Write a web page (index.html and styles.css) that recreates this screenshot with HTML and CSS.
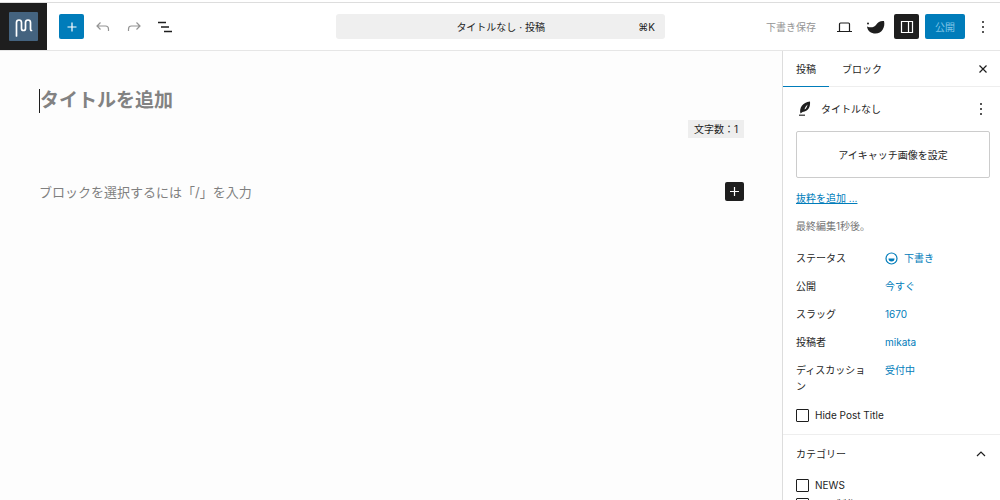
FILE: index.html
```html
<!DOCTYPE html>
<html lang="ja">
<head>
  <meta charset="UTF-8">
  <title>投稿を編集</title>
  <link rel="stylesheet" href="styles.css">
</head>
<body>
  <header class="topbar">
    <a href="#" class="site-logo" aria-label="サイト">
      <svg width="29" height="29" viewBox="0 0 29 29">
        <rect width="29" height="29" rx="1" fill="#44637f" stroke="none"/>
        <path d="M7.500 24V10.500a2.500 2.500 0 0 1 5 0v6a2 2 0 0 0 4 0v-6a2.500 2.500 0 0 1 5 0v6q0 2 1 2" fill="none" stroke="#fff" stroke-width="1.700" stroke-linecap="round"/>
      </svg>
    </a>
    <div class="tools">
      <button class="icon-button primary" aria-label="ブロックを追加">
        <svg width="18" height="18" viewBox="0 0 18 18"><path d="M9 4.500v9M4.500 9h9"/></svg>
      </button>
      <button class="icon-button muted" aria-label="元に戻す">
        <svg width="18" height="18" viewBox="0 0 18 18"><path d="M6.500 4.500L3 8l3.500 3.500M3 8h8.500q3 0 3 3v2"/></svg>
      </button>
      <button class="icon-button muted" aria-label="やり直す">
        <svg width="18" height="18" viewBox="0 0 18 18"><path d="M11.500 4.500L15 8l-3.500 3.500M15 8H6.500q-3 0-3 3v2"/></svg>
      </button>
      <button class="icon-button" aria-label="リスト表示">
        <svg class="bold" width="18" height="18" viewBox="0 0 18 18"><path d="M2 4.500h8M5 9h8M8 13.500h8"/></svg>
      </button>
    </div>
    <button class="command">
      <span class="command-title">タイトルなし · 投稿</span>
      <kbd class="shortcut">⌘K</kbd>
    </button>
    <div class="actions">
      <button class="save">下書き保存</button>
      <button class="icon-button" aria-label="表示">
        <svg width="18" height="18" viewBox="0 0 18 18"><path d="M3.500 13V6q0-1 1-1h8q1 0 1 1v7M1 13.500h15"/></svg>
      </button>
      <button class="icon-button" aria-label="プラグイン">
        <svg class="solid" width="20" height="18" viewBox="0 0 20 18"><circle cx="2" cy="5.500" r="1"/><path d="M1 8.500c3.500 1.500 7 1 9-1.500C12 4 14.500 2.500 18 3c1.500 6-2 12.500-8.500 12.500C5 15.500 1.500 13 1 8.500z"/></svg>
      </button>
      <button class="icon-button dark" aria-label="設定">
        <svg width="18" height="18" viewBox="0 0 18 18"><path d="M3.500 3.500h11v11h-11zM10.500 3.500v11"/></svg>
      </button>
      <button class="publish">公開</button>
      <button class="more" aria-label="オプション">
        <svg class="solid" width="18" height="18" viewBox="0 0 18 18"><circle cx="9" cy="4" r="1"/><circle cx="9" cy="9" r="1"/><circle cx="9" cy="14" r="1"/></svg>
      </button>
    </div>
  </header>

  <div class="workspace">
    <main class="editor">
      <h1 class="post-title">タイトルを追加</h1>
      <div class="count">文字数：1</div>
      <div class="block-row">
        <p class="prompt">ブロックを選択するには「/」を入力</p>
        <button class="inserter" aria-label="ブロックを追加">
          <svg width="19" height="19" viewBox="0 0 19 19"><path d="M9.500 5v9M5 9.500h9"/></svg>
        </button>
      </div>
    </main>

    <aside class="sidebar">
      <div class="tabs">
        <button class="tab active">投稿</button>
        <button class="tab">ブロック</button>
        <button class="close" aria-label="閉じる">
          <svg width="18" height="18" viewBox="0 0 18 18"><path d="M5.500 5.500l7 7M12.500 5.500l-7 7"/></svg>
        </button>
      </div>
      <section class="summary">
        <div class="summary-head">
          <svg class="solid" width="18" height="18" viewBox="0 0 18 18"><path fill-rule="evenodd" d="M4.500 13.500c-1.500-5.500 2-11 9.500-12 .5 5-1.500 10-7.500 10.500zM8.500 9.500c2-1 2.500-2.500 3-5C10 6 9 7.500 8.500 9.500z"/><path fill="#555" d="M3 14.500h6V16H3z"/></svg>
          <h2 class="summary-title">タイトルなし</h2>
          <button class="more" aria-label="操作">
            <svg class="solid" width="18" height="18" viewBox="0 0 18 18"><circle cx="9" cy="4" r="1"/><circle cx="9" cy="9" r="1"/><circle cx="9" cy="14" r="1"/></svg>
          </button>
        </div>
        <button class="featured">アイキャッチ画像を設定</button>
        <a href="#" class="excerpt">抜粋を追加 ...</a>
        <p class="edited">最終編集1秒後。</p>
        <dl class="fields">
          <dt>ステータス</dt>
          <dd><a href="#"><svg width="13" height="13" viewBox="0 0 13 13"><circle cx="6.500" cy="6.500" r="5.500"/><path class="solid" d="M3.500 6.500h6a3 3 0 0 1-6 0z"/></svg>下書き</a></dd>
          <dt>公開</dt>
          <dd><a href="#">今すぐ</a></dd>
          <dt>スラッグ</dt>
          <dd><a href="#">1670</a></dd>
          <dt>投稿者</dt>
          <dd><a href="#">mikata</a></dd>
          <dt>ディスカッション</dt>
          <dd><a href="#">受付中</a></dd>
        </dl>
        <label class="check"><input type="checkbox">Hide Post Title</label>
      </section>
      <section class="categories">
        <button class="panel-toggle">カテゴリー
          <svg width="18" height="18" viewBox="0 0 18 18"><path d="M5 11l4-4 4 4"/></svg>
        </button>
        <label class="check"><input type="checkbox">NEWS</label>
        <label class="check"><input type="checkbox">Web制作</label>
      </section>
    </aside>
  </div>
</body>
</html>
```
FILE: styles.css
```css
* {
  margin: 0;
  padding: 0;
  box-sizing: border-box;
}

body {
  height: 100vh;
  display: flex;
  flex-direction: column;
  overflow: hidden;
  border-top: 2px solid #fff;
  font-family: Inter, "Noto Sans CJK JP", sans-serif;
  font-size: 10px;
  line-height: 16px;
  color: #1e1e1e;
  background: #fff;
}

button {
  border: none;
  background: none;
  font: inherit;
  color: inherit;
  cursor: pointer;
}

a {
  color: #007cba;
  text-decoration: none;
}

svg {
  display: block;
  flex: none;
  fill: none;
  stroke: currentColor;
  stroke-width: 1.2;
}

.bold {
  stroke-width: 1.5;
}

.solid {
  fill: currentColor;
  stroke: none;
}

/* top bar */
.topbar {
  flex: none;
  display: grid;
  grid-template-columns: 1fr 33% 1fr;
  grid-template-areas: "tools command actions";
  align-items: center;
  height: 49px;
  border-top: 1px solid #ddd;
  border-bottom: 1px solid #e6e6e6;
}

.site-logo {
  grid-area: tools;
  display: flex;
  align-items: center;
  justify-content: center;
  width: 47px;
  height: 47px;
  background: #1e1e1e;
}

.tools {
  grid-area: tools;
  display: flex;
  gap: 6px;
  margin-left: 59px;
}

.icon-button {
  display: flex;
  align-items: center;
  justify-content: center;
  width: 25px;
  height: 25px;
  border-radius: 2px;
}

.primary {
  background: #007cba;
  color: #fff;
}

.muted {
  color: #949494;
}

.dark {
  background: #1e1e1e;
  color: #fff;
}

.command {
  grid-area: command;
  display: flex;
  align-items: center;
  height: 25px;
  margin-left: 1px;
  padding: 0 10px 0 27px;
  border-radius: 3px;
  background: #efefef;
}

.command-title {
  flex: 1;
}

.shortcut {
  font-family: inherit;
}

.actions {
  grid-area: actions;
  display: flex;
  align-items: center;
  justify-content: flex-end;
  gap: 6px;
  padding-right: 8px;
}

.actions .more {
  margin-left: 3px;
}

.save {
  margin-right: 10px;
  color: #949494;
}

.publish {
  height: 25px;
  padding: 0 10px;
  border-radius: 2px;
  background: #007cba;
  color: #7fc4e6;
}

/* canvas */
.workspace {
  flex: 1;
  display: flex;
  min-height: 0;
}

.editor {
  flex: 1;
  padding: 38px 38px 0 39px;
  background: #fdfdfd;
}

.post-title {
  width: fit-content;
  border-left: 1px solid #1e1e1e;
  font-size: 19px;
  line-height: 24px;
  color: #828282;
}

.count {
  width: fit-content;
  margin: 7px 0 0 auto;
  padding: 1px 6px;
  background: #eee;
}

.block-row {
  display: flex;
  align-items: center;
  justify-content: space-between;
  margin-top: 44px;
}

.prompt {
  font-size: 13px;
  color: #808080;
}

.inserter {
  border-radius: 2px;
  background: #1e1e1e;
  color: #fff;
}

/* settings sidebar */
.sidebar {
  flex: none;
  width: 218px;
  overflow: hidden;
  border-left: 1px solid #ddd;
}

.tabs {
  display: flex;
  height: 36px;
  box-shadow: inset 0 -1px #eee;
}

.tab {
  padding: 0 13px;
}

.active {
  box-shadow: inset 0 -1px #007cba;
}

.close {
  margin-left: auto;
  padding-right: 8px;
}

.summary {
  padding: 13px 10px 11px 13px;
  border-bottom: 1px solid #eee;
}

.summary-head {
  display: flex;
  align-items: center;
  gap: 7px;
  height: 18px;
}

.summary-title {
  flex: 1;
  font-size: 10px;
  font-weight: 400;
}

.featured {
  display: block;
  width: 100%;
  height: 47px;
  margin: 13px 0 12px;
  border: 1px solid #ccc;
  border-radius: 2px;
}

.excerpt {
  text-decoration: underline;
}

.edited {
  margin-top: 12px;
  color: #757575;
}

.fields {
  display: grid;
  grid-template-columns: 72px 1fr;
  gap: 12px 17px;
  margin: 16px 0 13px;
}

.fields a {
  display: flex;
  align-items: center;
  gap: 6px;
}

.check {
  display: flex;
  align-items: center;
  gap: 6px;
}

.check input {
  appearance: none;
  width: 13px;
  height: 13px;
  border: 1px solid #1e1e1e;
  border-radius: 1px;
}

.categories {
  padding: 10px 10px 0 13px;
}

.panel-toggle {
  display: flex;
  align-items: center;
  justify-content: space-between;
  width: 100%;
  margin-bottom: 14px;
}

.categories .check + .check {
  margin-top: 3px;
}
```
